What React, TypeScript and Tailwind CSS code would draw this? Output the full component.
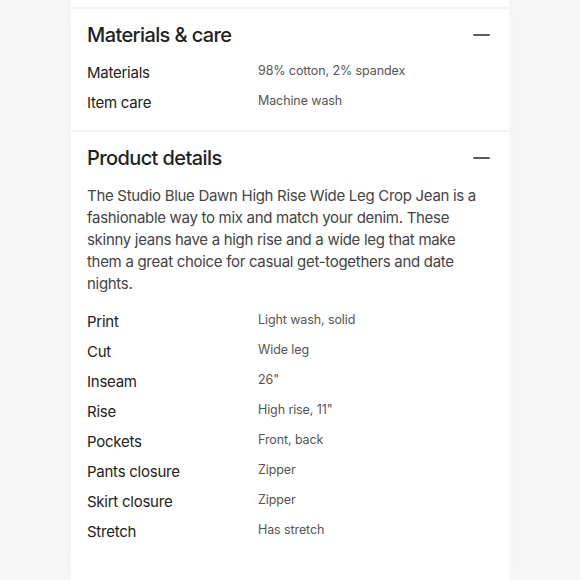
import React from "react";

const font = { fontFamily: "Inter, 'Noto Sans', sans-serif" };

function Minus() {
  return <span className="block w-[17px] h-[2px] bg-[#5a5a5a] rounded-full" />;
}

function Row({ label, value }: { label: string; value: string }) {
  return (
    <div className="flex items-start">
      <div className="w-[171px] shrink-0 text-[15px] leading-[30px] tracking-[-0.25px] text-[#222]">{label}</div>
      <div className="text-[12.5px] leading-[26px] tracking-[-0.1px] text-[#555]">{value}</div>
    </div>
  );
}

function Header({ title }: { title: string }) {
  return (
    <div className="flex items-center justify-between pr-[19px] h-[28px]">
      <h2 className="text-[20px] font-medium text-[#1f1f1f] tracking-[-0.6px]">{title}</h2>
      <Minus />
    </div>
  );
}

const details = [
  ["Print", "Light wash, solid"],
  ["Cut", "Wide leg"],
  ["Inseam", "26\""],
  ["Rise", "High rise, 11\""],
  ["Pockets", "Front, back"],
  ["Pants closure", "Zipper"],
  ["Skirt closure", "Zipper"],
  ["Stretch", "Has stretch"],
];

export default function App() {
  return (
    <div className="w-[580px] h-[580px] bg-[#f7f7f7] flex justify-center overflow-hidden" style={font}>
      <div className="w-[438px] flex flex-col shadow-[0_0_24px_rgba(0,0,0,0.025)]">
        <div className="h-[7px] bg-white" />
        <div className="h-[2px] bg-[#f3f3f3]" />

        {/* Materials & care */}
        <section className="bg-white pl-4 pt-[12px] pb-[12px]">
          <Header title="Materials & care" />
          <div className="mt-[9px] flex flex-col">
            <Row label="Materials" value="98% cotton, 2% spandex" />
            <Row label="Item care" value="Machine wash" />
          </div>
        </section>

        <div className="h-[2px] bg-[#f3f3f3]" />

        {/* Product details */}
        <section className="bg-white pl-4 pt-[12px] flex-1">
          <Header title="Product details" />
          <p className="mt-[13px] pr-4 text-[15px] leading-[22px] tracking-[-0.3px] text-[#444]">
            The Studio Blue Dawn High Rise Wide Leg Crop Jean is a fashionable way to mix and match your denim. These skinny jeans have a high rise and a wide leg that make them a great choice for casual get-togethers and date nights.
          </p>
          <div className="mt-[12px] flex flex-col">
            {details.map(([l, v]) => (
              <Row key={l} label={l} value={v} />
            ))}
          </div>
        </section>
      </div>
    </div>
  );
}
